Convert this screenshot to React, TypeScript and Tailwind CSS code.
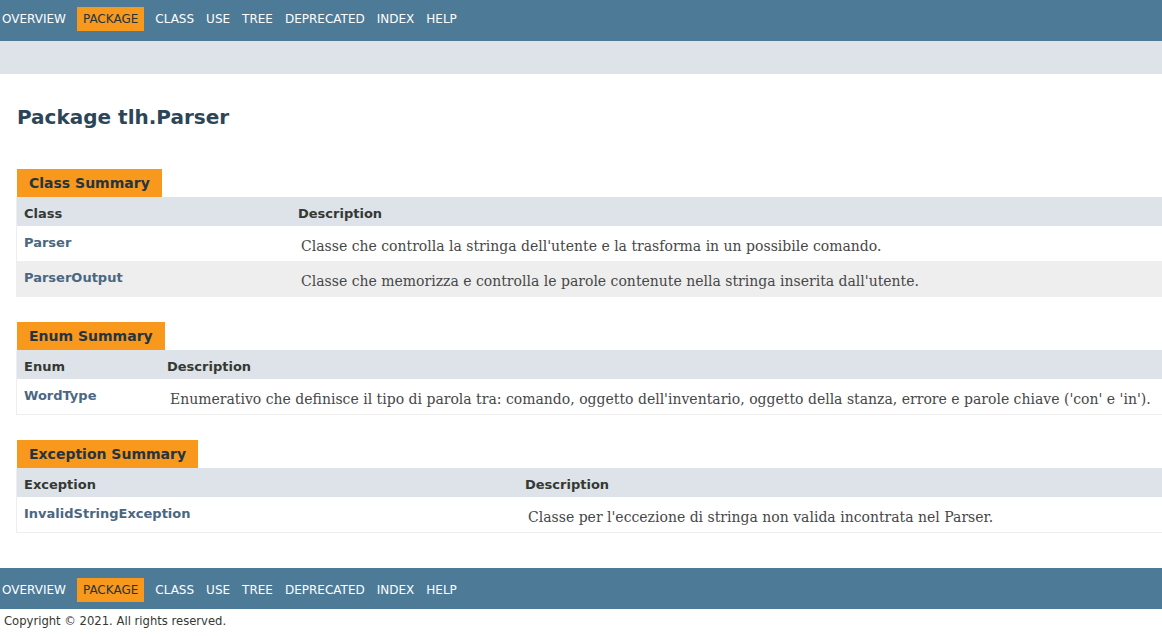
import React from 'react';

const navItems = ['Overview', 'Package', 'Class', 'Use', 'Tree', 'Deprecated', 'Index', 'Help'];

const NavBar: React.FC<{ top: string }> = ({ top }) => (
  <div className={`h-[41px] bg-[#4D7A97] ${top}`}>
    <ul className="flex ml-[-4px] text-[12px] leading-[14px] uppercase">
      {navItems.map(item => (
        <li
          key={item}
          className={`px-[6px] py-[5px] ${item === 'Package' ? 'mx-[5px] bg-[#F8981D] text-[#253441]' : 'text-white'}`}
        >
          {item}
        </li>
      ))}
    </ul>
  </div>
);

type Row = { name: string; desc: string };

const Summary: React.FC<{ title: string; col: string; width: string; rows: Row[]; mt: string }> = ({ title, col, width, rows, mt }) => (
  <section className={mt}>
    <div className="ml-[1px] inline-block bg-[#F8981D] text-[#253441] font-bold text-[14px] leading-[16px] pt-[6px] pb-[6px] px-[12px]">
      {title}
    </div>
    <div className="border-l border-b border-[#EEEEEE]">
      <div className="flex h-[29px] bg-[#DEE3E9] text-[13px] font-bold text-[#353833] leading-[18px]">
        <div className={`${width} shrink-0 pl-[7px] pt-[8px]`}>{col}</div>
        <div className="pl-[7px] pt-[8px]">Description</div>
      </div>
      {rows.map((r, i) => (
        <div key={r.name} className={`flex h-[35px] ${i % 2 === 1 ? 'bg-[#EEEEEF]' : 'bg-white'}`}>
          <div className={`${width} shrink-0 pl-[7px] pt-[8px] text-[13px] font-bold text-[#4A6782] leading-[18px]`}>{r.name}</div>
          <div className="pl-[10px] pt-[11px] whitespace-nowrap text-[14px] leading-[18px] text-[#474747] font-['DejaVu_Serif',serif]">
            {r.desc}
          </div>
        </div>
      ))}
    </div>
  </section>
);

export default function App() {
  return (
    <div className="min-h-[636px] bg-white font-['DejaVu_Sans',Arial,sans-serif] text-[#353833] overflow-hidden">
      <NavBar top="pt-[7px]" />
      <div className="h-[33px] bg-[#DEE3E9]" />
      <main className="pl-[16px]">
        <h1 className="pl-[1px] mt-[31px] text-[20px] leading-[24px] font-bold text-[#2C4557]">Package tlh.Parser</h1>
        <Summary
          mt="mt-[40px]"
          title="Class Summary"
          col="Class"
          width="w-[274px]"
          rows={[
            { name: 'Parser', desc: "Classe che controlla la stringa dell'utente e la trasforma in un possibile comando." },
            { name: 'ParserOutput', desc: "Classe che memorizza e controlla le parole contenute nella stringa inserita dall'utente." },
          ]}
        />
        <Summary
          mt="mt-[25px]"
          title="Enum Summary"
          col="Enum"
          width="w-[143px]"
          rows={[
            { name: 'WordType', desc: "Enumerativo che definisce il tipo di parola tra: comando, oggetto dell'inventario, oggetto della stanza, errore e parole chiave ('con' e 'in')." },
          ]}
        />
        <Summary
          mt="mt-[25px]"
          title="Exception Summary"
          col="Exception"
          width="w-[501px]"
          rows={[
            { name: 'InvalidStringException', desc: "Classe per l'eccezione di stringa non valida incontrata nel Parser." },
          ]}
        />
      </main>
      <div className="mt-[35px]">
        <NavBar top="pt-[10px]" />
      </div>
      <p className="pl-[4px] pt-[4px] text-[11.6px] leading-[16px] text-[#353833]">Copyright © 2021. All rights reserved.</p>
    </div>
  );
}
